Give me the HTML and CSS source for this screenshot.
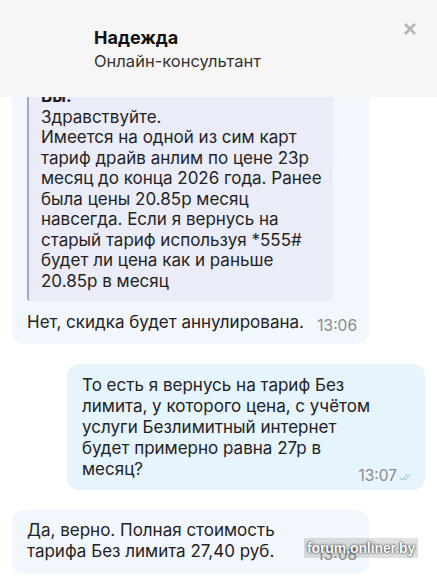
FILE: index.html
```html
<!DOCTYPE html>
<html lang="ru">
<head>
    <meta charset="UTF-8">
    <meta name="viewport" content="width=device-width, initial-scale=1.0">
    <title>Онлайн-консультант</title>
    <link rel="stylesheet" href="styles.css">
</head>

<body>
    <div class="chat-header">
        <div class="agent">
            <div class="name">Надежда</div>
            <div class="role">Онлайн-консультант</div>
        </div>
        <button class="close" aria-label="Закрыть">
            <svg width="14" height="14" viewBox="0 0 14 14">
                <path d="M2 2 L12 12 M12 2 L2 12" stroke="#b5b5b5" stroke-width="2.6" stroke-linecap="butt"/>
            </svg>
        </button>
    </div>

    <div class="chat-content">
        <div class="message">
            <div class="message-bubble first">
                <div class="quote">
                    <div class="quote-author">Вы:</div>
                    Здравствуйте.<br>
                    Имеется на одной из сим карт<br>
                    тариф драйв анлим по цене 23р<br>
                    месяц до конца 2026 года. Ранее<br>
                    была цены 20.85р месяц<br>
                    навсегда. Если я вернусь на<br>
                    старый тариф используя *555#<br>
                    будет ли цена как и раньше<br>
                    20.85р в месяц
                </div>
                <div class="text">
                    <span class="time">13:06</span>
                    Нет, скидка будет аннулирована.
                </div>
            </div>
        </div>

        <div class="message user">
            <div class="message-bubble">
                <div class="text">
                    То есть я вернусь на тариф Без<br>
                    лимита, у которого цена, с учётом<br>
                    услуги Безлимитный интернет<br>
                    будет примерно равна 27р в<br>
                    <span class="time late">13:07
                        <svg class="check" width="14" height="8" viewBox="0 0 14 8">
                            <path d="M0.5 4.5 L3 7 L8.5 1 M5 6 L6 7 L11.5 1" fill="none" stroke="#9cbbd8" stroke-width="1"/>
                        </svg>
                    </span>
                    месяц?
                </div>
            </div>
        </div>

        <div class="message">
            <div class="message-bubble">
                <div class="text">
                    Да, верно. Полная стоимость<br>
                    <span class="time">13:08</span>
                    тарифа Без лимита 27,40 руб.
                </div>
            </div>
        </div>
    </div>

    <div class="watermark">forum.onliner.by</div>
</body>
</html>
```

FILE: styles.css
```css
* {
    margin: 0;
    padding: 0;
    box-sizing: border-box;
}

body {
    font-family: Inter, "Noto Sans", sans-serif;
    color: #1f1f1f;
    width: 437px;
    height: 576px;
    overflow: hidden;
    background: #fff;
    position: relative;
}

/* шапка */
.chat-header {
    display: flex;
    justify-content: space-between;
    height: 97px;
    padding: 26px 20px 0 94px;
    background: #f6f6f6;
    position: relative;
    z-index: 2;
}

.chat-header .name {
    font-size: 18px;
    font-weight: 700;
    color: #111;
    line-height: 24px;
}

.chat-header .role {
    font-size: 16.5px;
    color: #333;
    line-height: 22px;
}

.close {
    background: none;
    border: none;
    width: 14px;
    height: 14px;
    margin-top: -4px;
    cursor: pointer;
}

/* сообщения */
.chat-content {
    height: 479px;
    overflow: hidden;
    padding: 0 12px;
}

.message {
    display: flex;
    margin-bottom: 20px;
}

.message.user {
    justify-content: flex-end;
}

.message-bubble {
    width: 357px;
    background: #f2f6fd;
    border-radius: 12px;
    padding: 10px 12px 9px 15px;
    font-size: 17px;
    line-height: 21px;
}

.message-bubble.first {
    margin-top: -25px;
    padding-bottom: 8px;
}

.message.user .message-bubble {
    width: 358px;
    background: #e6f4fd;
    padding: 11px 12px 5px 15px;
}

.quote {
    display: inline-block;
    background: #eaecf8;
    border-left: 2px solid #a3a8bd;
    border-radius: 3px;
    padding: 4px 11px 10px 12px;
    margin-bottom: 11px;
    line-height: 20.5px;
}

.quote-author {
    font-weight: 700;
}

.text {
    color: #222;
}

.time {
    float: right;
    margin-top: 3px;
    font-size: 15.5px;
    color: #8a8a8a;
    display: flex;
    align-items: center;
    gap: 2px;
}

.time.late {
    margin-top: 8px;
    line-height: 18px;
}

.check {
    margin-top: 2px;
}

/* водяной знак */
.watermark {
    position: absolute;
    left: 304px;
    top: 538px;
    padding: 2px 3px;
    font-family: "Liberation Sans", sans-serif;
    font-weight: 700;
    font-size: 14px;
    letter-spacing: -0.1px;
    color: #fff;
    background: rgba(120, 120, 120, 0.22);
    text-shadow: 0 0 3px rgba(0, 0, 0, 0.7), 0 0 1px rgba(0, 0, 0, 0.8);
}
```
